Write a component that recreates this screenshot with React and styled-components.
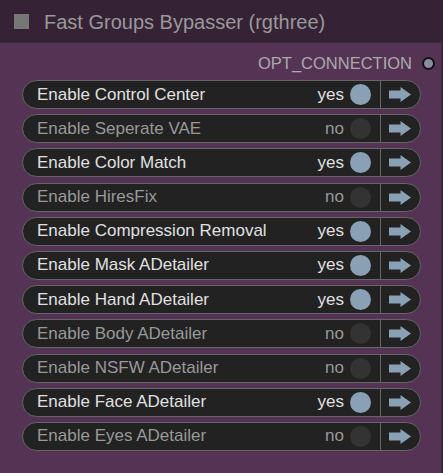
import React from "react";
import styled, { createGlobalStyle } from "styled-components";

const Global = createGlobalStyle`
  html, body { margin: 0; padding: 0; background: #553355; }
  body { font-family: "Liberation Sans", Arial, sans-serif; }
`;

const Node = styled.div`
  width: 443px;
  height: 473px;
  display: flex;
  flex-direction: column;
  background: #553355;
  box-sizing: border-box;
  box-shadow: inset -2px 0 0 #3f2640;
  overflow: hidden;
`;

const TitleBar = styled.div`
  height: 43px;
  flex: none;
  display: flex;
  align-items: center;
  gap: 15px;
  padding-left: 14px;
  background: #352235;
  border-bottom: 1px solid #3e2a3f;
  box-sizing: border-box;
`;

const TitleBox = styled.div`
  width: 15px;
  height: 15px;
  background: #777;
`;

const Title = styled.div`
  color: #999;
  font-size: 20px;
  line-height: 1;
  margin-top: 1px;
`;

const OutputRow = styled.div`
  height: 20px;
  margin-top: 10px;
  display: flex;
  align-items: center;
  justify-content: flex-end;
  gap: 10px;
  padding-right: 8px;
`;

const OutputLabel = styled.span`
  color: #aaa;
  font-size: 16.5px;
  line-height: 1;
`;

const Slot = styled.span`
  width: 9px;
  height: 9px;
  border-radius: 50%;
  background: #8a8aa0;
  border: 2px solid #111;
`;

const List = styled.div`
  display: flex;
  flex-direction: column;
  gap: 5.2px;
  padding: 7px 22px 0 22px;
`;

const Row = styled.div`
  height: 29px;
  box-sizing: border-box;
  display: flex;
  align-items: center;
  background: #222;
  border: 1px solid #666;
  border-radius: 15px;
`;

const Label = styled.span`
  flex: 1;
  padding-left: 14px;
  font-size: 17px;
  color: ${(p) => (p.$on ? "#e0e0e0" : "#999")};
  white-space: nowrap;
`;

const Value = styled.span`
  font-size: 17px;
  color: ${(p) => (p.$on ? "#e0e0e0" : "#999")};
  margin-right: 6px;
`;

const Toggle = styled.span`
  width: 21px;
  height: 21px;
  border-radius: 50%;
  background: ${(p) => (p.$on ? "#89a0b5" : "#333")};
  margin-right: 9px;
`;

const ArrowCell = styled.span`
  width: 40px;
  align-self: stretch;
  border-left: 1px solid #666;
  display: flex;
  align-items: center;
  padding-left: 8px;
  box-sizing: border-box;
`;

const Arrow = () => (
  <svg width="22" height="15" viewBox="0 0 22 15">
    <path d="M0 3.5 H11.5 V0 L22 7.5 L11.5 15 V11.5 H0 Z" fill="#89a0b5" />
  </svg>
);

const items = [
  ["Enable Control Center", true],
  ["Enable Seperate VAE", false],
  ["Enable Color Match", true],
  ["Enable HiresFix", false],
  ["Enable Compression Removal", true],
  ["Enable Mask ADetailer", true],
  ["Enable Hand ADetailer", true],
  ["Enable Body ADetailer", false],
  ["Enable NSFW ADetailer", false],
  ["Enable Face ADetailer", true],
  ["Enable Eyes ADetailer", false],
];

export default function App() {
  return (
    <>
      <Global />
      <Node>
        <TitleBar>
          <TitleBox />
          <Title>Fast Groups Bypasser (rgthree)</Title>
        </TitleBar>
        <OutputRow>
          <OutputLabel>OPT_CONNECTION</OutputLabel>
          <Slot />
        </OutputRow>
        <List>
          {items.map(([name, on]) => (
            <Row key={name}>
              <Label $on={on}>{name}</Label>
              <Value $on={on}>{on ? "yes" : "no"}</Value>
              <Toggle $on={on} />
              <ArrowCell>
                <Arrow />
              </ArrowCell>
            </Row>
          ))}
        </List>
      </Node>
    </>
  );
}
